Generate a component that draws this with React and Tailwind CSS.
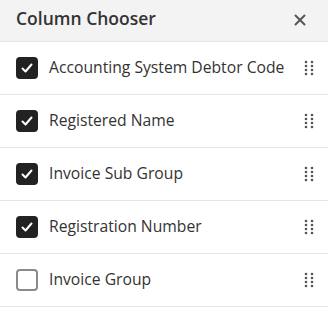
import { useState } from 'react';

const columns = [
    { id: 'debtorCode', label: 'Accounting System Debtor Code', visible: true },
    { id: 'registeredName', label: 'Registered Name', visible: true },
    { id: 'invoiceSubGroup', label: 'Invoice Sub Group', visible: true },
    { id: 'registrationNumber', label: 'Registration Number', visible: true },
    { id: 'invoiceGroup', label: 'Invoice Group', visible: false },
];

export default function App() {
    const [list, setList] = useState(columns);

    const toggle = (id) => {
        setList(list.map(col => col.id == id ? { ...col, visible: !col.visible } : col));
    };

    return (
        <div className="w-[328px] h-[316px] bg-white text-[#333] font-['Segoe_UI','Open_Sans',sans-serif]">
            <div className="h-[42px] flex items-center justify-between pl-4 pr-[22px] bg-[#f3f3f3] border-b border-[#e3e6ea]">
                <h1 className="text-[17.5px] leading-none font-semibold text-[#333] -mt-[3px]">Column Chooser</h1>
                <button className="text-[#555] -mt-[2px]">
                    <svg width="12" height="12" viewBox="0 0 12 12" stroke="currentColor" strokeWidth="2" strokeLinecap="round">
                        <path d="M1.5 1.5L10.5 10.5M10.5 1.5L1.5 10.5" />
                    </svg>
                </button>
            </div>
            {list.map(col =>
                <ColumnRow key={col.id} column={col} onToggle={() => toggle(col.id)} />
            )}
        </div>
    );
}

const ColumnRow = ({ column, onToggle }) => {
    return (
        <div className="h-[53px] flex items-center pl-4 pr-[14px] border-b border-[#e3e6ea]">
            <button
                onClick={onToggle}
                className={`w-[22px] h-[22px] flex items-center justify-center rounded-[4px] border-2 ${column.visible ? 'bg-[#222] border-[#222]' : 'bg-white border-[#8a8a8a]'}`}>
                {column.visible &&
                    <svg width="14" height="14" viewBox="0 0 14 14" fill="none" stroke="white" strokeWidth="2" strokeLinecap="round" strokeLinejoin="round">
                        <path d="M2.5 7.5L5.5 10.5L11.5 3.5" />
                    </svg>
                }
            </button>
            <span className="ml-[11px] flex-1 text-[15.7px] text-[#333]">{column.label}</span>
            <svg width="10" height="16" viewBox="0 0 10 16" fill="#555">
                <circle cx="2" cy="2" r="1.3" />
                <circle cx="8" cy="2" r="1.3" />
                <circle cx="2" cy="6" r="1.3" />
                <circle cx="8" cy="6" r="1.3" />
                <circle cx="2" cy="10" r="1.3" />
                <circle cx="8" cy="10" r="1.3" />
                <circle cx="2" cy="14" r="1.3" />
                <circle cx="8" cy="14" r="1.3" />
            </svg>
        </div>
    );
};
